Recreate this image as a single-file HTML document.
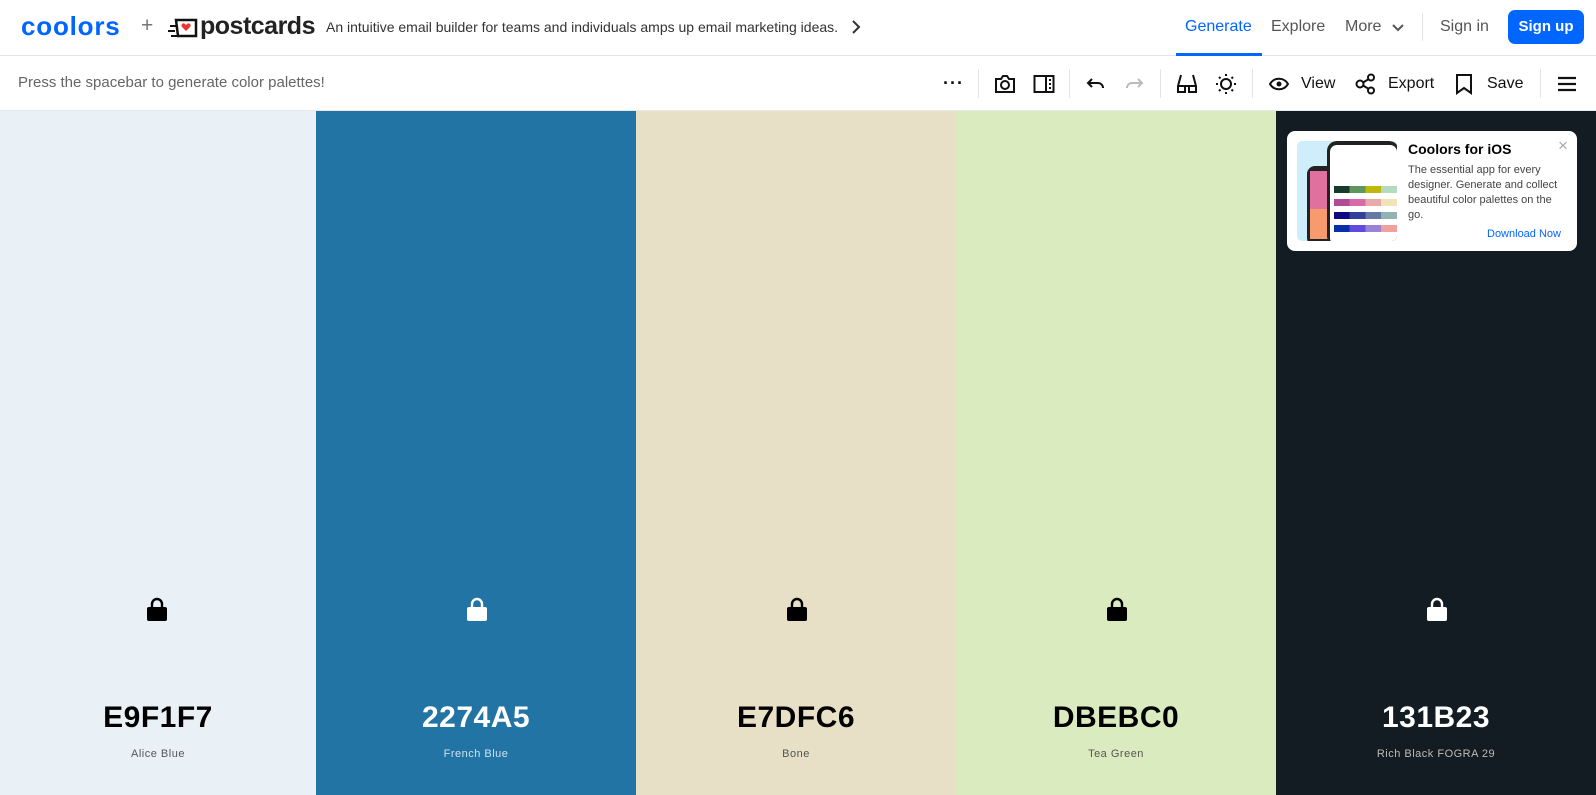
<!DOCTYPE html>
<html><head><meta charset="utf-8"><style>
*{margin:0;padding:0;box-sizing:border-box}
body{width:1596px;height:795px;overflow:hidden;font-family:"Liberation Sans",sans-serif;background:#fff;position:relative}
.hdr{position:absolute;left:0;top:0;width:1596px;height:56px;border-bottom:1px solid #e4e4e4}
.tb{position:absolute;left:0;top:56px;width:1596px;height:55px;border-bottom:1px solid #e8e8e8}
.a{position:absolute;white-space:nowrap}
.col{position:absolute;top:111px;height:684px}
.lock{position:absolute;top:597px;width:20px;height:24px}
.hex{position:absolute;top:701px;width:320px;text-align:center;font-size:30px;font-weight:bold;letter-spacing:0.5px}
.nm{position:absolute;top:748px;width:320px;text-align:center;font-size:11px;letter-spacing:.5px}
.sep{position:absolute;top:69px;width:1px;height:29px;background:#e4e4e4}
</style></head><body>
<div class="hdr"></div>
<div class="a" style="left:21px;top:11px;font-size:26px;font-weight:bold;color:#0066ff;letter-spacing:0.8px">coolors</div>
<div class="a" style="left:141px;top:14px;font-size:21px;color:#777">+</div>
<svg class="a" style="left:168px;top:16px" width="32" height="24" viewBox="0 0 32 24"><path d="M8 4h20v16H10z" fill="none" stroke="#111" stroke-width="2.5"/><path d="M2 10h6M0 15h7M3 20h6" stroke="#111" stroke-width="2"/><path d="M18 15l-4-4a2 2 0 013-3l1 1 1-1a2 2 0 013 3z" fill="#e33"/></svg>
<div class="a" style="left:200px;top:12px;font-size:25px;font-weight:bold;color:#222;letter-spacing:-0.5px">postcards</div>
<div class="a" style="left:326px;top:19px;font-size:14px;color:#333">An intuitive email builder for teams and individuals amps up email marketing ideas.</div>
<svg class="a" style="left:851px;top:19px" width="10" height="16"><path d="M2 2l6 6-6 6" fill="none" stroke="#333" stroke-width="2"/></svg>
<div class="a" style="left:1185px;top:18px;font-size:16px;color:#0066ff">Generate</div>
<div style="position:absolute;left:1176px;top:53px;width:86px;height:3px;background:#0066ff"></div>
<div class="a" style="left:1271px;top:18px;font-size:16px;color:#555">Explore</div>
<div class="a" style="left:1345px;top:18px;font-size:16px;color:#555">More</div>
<svg class="a" style="left:1391px;top:23px" width="14" height="10"><path d="M2 2l5 5 5-5" fill="none" stroke="#555" stroke-width="2"/></svg>
<div class="sep" style="top:13px;height:28px;left:1422px"></div>
<div class="a" style="left:1440px;top:18px;font-size:16px;color:#555">Sign in</div>
<div class="a" style="left:1508px;top:10px;width:76px;height:34px;background:#0066ff;border-radius:7px;color:#fff;font-size:15px;font-weight:bold;text-align:center;line-height:34px">Sign up</div>
<div class="tb"></div>
<div class="a" style="left:18px;top:74px;font-size:15px;color:#666">Press the spacebar to generate color palettes!</div>
<div class="a" style="left:943px;top:73px;font-size:18px;font-weight:bold;color:#111;letter-spacing:1px">···</div>
<div class="sep" style="left:978px"></div>
<svg class="a" style="left:994px;top:74px" width="22" height="20" viewBox="0 0 22 20"><path d="M2 5h5l2-3h4l2 3h5v13H2z" fill="none" stroke="#111" stroke-width="2"/><circle cx="11" cy="11" r="4" fill="none" stroke="#111" stroke-width="2"/></svg>
<svg class="a" style="left:1033px;top:74px" width="22" height="20" viewBox="0 0 22 20"><rect x="1.5" y="2" width="19" height="16" fill="none" stroke="#111" stroke-width="2"/><path d="M13 2v16M16 6h2M16 10h2M16 14h2" stroke="#111" stroke-width="2"/></svg>
<div class="sep" style="left:1069px"></div>
<svg class="a" style="left:1086px;top:76px" width="20" height="16"><path d="M6 3L2 7l4 4M2 7h10a5 5 0 015 5" fill="none" stroke="#111" stroke-width="2"/></svg>
<svg class="a" style="left:1124px;top:76px" width="20" height="16"><path d="M14 3l4 4-4 4M18 7H8a5 5 0 00-5 5" fill="none" stroke="#bbb" stroke-width="2"/></svg>
<div class="sep" style="left:1160px"></div>
<svg class="a" style="left:1176px;top:73px" width="22" height="22" viewBox="0 0 22 22"><path d="M5 2L2 13v6h7v-6h4v6h7v-6L17 2" fill="none" stroke="#111" stroke-width="2"/><path d="M2 13h7M13 13h7" stroke="#111" stroke-width="2"/></svg>
<svg class="a" style="left:1215px;top:73px" width="22" height="22" viewBox="0 0 22 22"><circle cx="11" cy="11" r="5" fill="none" stroke="#111" stroke-width="2"/><path d="M11 1v2M11 19v2M1 11h2M19 11h2M4 4l1.5 1.5M16.5 16.5L18 18M4 18l1.5-1.5M16.5 5.5L18 4" stroke="#111" stroke-width="2"/></svg>
<div class="sep" style="left:1252px"></div>
<svg class="a" style="left:1269px;top:77px" width="20" height="14"><path d="M1 7c4-7 14-7 18 0c-4 7-14 7-18 0z" fill="none" stroke="#111" stroke-width="2"/><circle cx="10" cy="7" r="2.5" fill="#111"/></svg>
<div class="a" style="left:1301px;top:75px;font-size:16px;color:#111">View</div>
<svg class="a" style="left:1355px;top:73px" width="22" height="22" viewBox="0 0 22 22"><circle cx="5" cy="11" r="3.5" fill="none" stroke="#111" stroke-width="2"/><circle cx="16" cy="4.5" r="3" fill="none" stroke="#111" stroke-width="2"/><circle cx="16" cy="17.5" r="3" fill="none" stroke="#111" stroke-width="2"/><path d="M8 9.5l5-3M8 12.5l5 3" stroke="#111" stroke-width="2"/></svg>
<div class="a" style="left:1388px;top:75px;font-size:16px;color:#111">Export</div>
<svg class="a" style="left:1455px;top:73px" width="18" height="22"><path d="M2 2h14v18l-7-5-7 5z" fill="none" stroke="#111" stroke-width="2"/></svg>
<div class="a" style="left:1487px;top:75px;font-size:16px;color:#111">Save</div>
<div class="sep" style="left:1540px"></div>
<svg class="a" style="left:1557px;top:76px" width="20" height="16"><path d="M1 2h18M1 8h18M1 14h18" stroke="#111" stroke-width="2.2"/></svg>

<div class="col" style="left:0;width:316px;background:#e9f1f7"></div>
<div class="col" style="left:316px;width:320px;background:#2274a5"></div>
<div class="col" style="left:636px;width:320px;background:#e7dfc6"></div>
<div class="col" style="left:956px;width:320px;background:#dbebc0"></div>
<div class="col" style="left:1276px;width:320px;background:#131b23"></div>

<svg class="lock" style="left:147px" viewBox="0 0 20 24"><path d="M5 11V7a5 5 0 0110 0v4" fill="none" stroke="#000" stroke-width="2.4"/><rect x="0" y="10" width="20" height="14" rx="2" fill="#000"/></svg>
<svg class="lock" style="left:467px" viewBox="0 0 20 24"><path d="M5 11V7a5 5 0 0110 0v4" fill="none" stroke="#fff" stroke-width="2.4"/><rect x="0" y="10" width="20" height="14" rx="2" fill="#fff"/></svg>
<svg class="lock" style="left:787px" viewBox="0 0 20 24"><path d="M5 11V7a5 5 0 0110 0v4" fill="none" stroke="#000" stroke-width="2.4"/><rect x="0" y="10" width="20" height="14" rx="2" fill="#000"/></svg>
<svg class="lock" style="left:1107px" viewBox="0 0 20 24"><path d="M5 11V7a5 5 0 0110 0v4" fill="none" stroke="#000" stroke-width="2.4"/><rect x="0" y="10" width="20" height="14" rx="2" fill="#000"/></svg>
<svg class="lock" style="left:1427px" viewBox="0 0 20 24"><path d="M5 11V7a5 5 0 0110 0v4" fill="none" stroke="#fff" stroke-width="2.4"/><rect x="0" y="10" width="20" height="14" rx="2" fill="#fff"/></svg>

<div class="hex" style="left:-2px;color:#000">E9F1F7</div><div class="nm" style="left:-2px;color:#555">Alice Blue</div>
<div class="hex" style="left:316px;color:#fff">2274A5</div><div class="nm" style="left:316px;color:#cfe0ee">French Blue</div>
<div class="hex" style="left:636px;color:#000">E7DFC6</div><div class="nm" style="left:636px;color:#555">Bone</div>
<div class="hex" style="left:956px;color:#000">DBEBC0</div><div class="nm" style="left:956px;color:#555">Tea Green</div>
<div class="hex" style="left:1276px;color:#fff">131B23</div><div class="nm" style="left:1276px;color:#bbb">Rich Black FOGRA 29</div>

<div class="a" style="left:1287px;top:131px;width:290px;height:120px;background:#fff;border-radius:8px"></div>
<div class="a" style="left:1297px;top:141px;width:100px;height:100px;background:#cdeefa;border-radius:5px;overflow:hidden">
 <div style="position:absolute;left:10px;top:25px;width:30px;height:80px;background:#222;border-radius:8px"></div>
 <div style="position:absolute;left:13px;top:30px;width:25px;height:38px;background:#e0719f"></div>
 <div style="position:absolute;left:13px;top:68px;width:25px;height:30px;background:#f79a6e"></div>
 <div style="position:absolute;left:30px;top:0px;width:72px;height:105px;background:#222;border-radius:10px"></div>
 <div style="position:absolute;left:33px;top:4px;width:67px;height:100px;background:#fff;border-radius:7px"></div>
 <div style="position:absolute;left:37px;top:45px;width:63px;height:7px;background:linear-gradient(90deg,#173a2b 25%,#5e9560 25% 50%,#bdb80a 50% 75%,#b3dbc2 75%)"></div>
 <div style="position:absolute;left:37px;top:58px;width:63px;height:7px;background:linear-gradient(90deg,#b04b97 25%,#d86ba5 25% 50%,#e8aaa9 50% 75%,#f2e2b5 75%)"></div>
 <div style="position:absolute;left:37px;top:71px;width:63px;height:7px;background:linear-gradient(90deg,#0b0a83 25%,#343f9d 25% 50%,#6679a4 50% 75%,#93b3b3 75%)"></div>
 <div style="position:absolute;left:37px;top:84px;width:63px;height:7px;background:linear-gradient(90deg,#0530a8 25%,#6149e0 25% 50%,#9a82d4 50% 75%,#f0a19b 75%)"></div>
</div>
<div class="a" style="left:1408px;top:141px;font-size:14px;font-weight:bold;color:#000">Coolors for iOS</div>
<div class="a" style="left:1558px;top:136px;font-size:17px;color:#aaa">×</div>
<div class="a" style="left:1408px;top:163px;font-size:11px;line-height:15px;color:#444;white-space:normal;width:162px">The essential app for every designer. Generate and collect beautiful color palettes on the go.</div>
<div class="a" style="left:1487px;top:228px;font-size:11px;color:#0066ff">Download Now</div>
</body></html>
